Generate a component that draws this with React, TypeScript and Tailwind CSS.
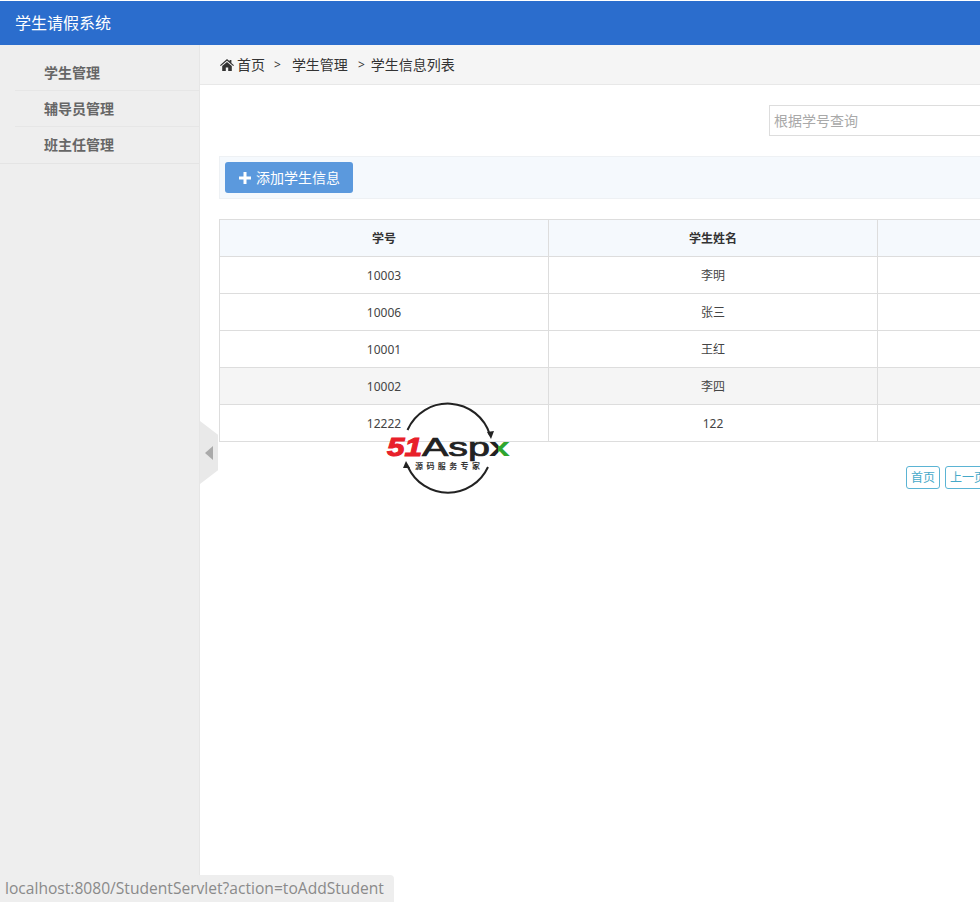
const menu = ['学生管理', '辅导员管理', '班主任管理']

const students = [
  { id: '10003', name: '李明' },
  { id: '10006', name: '张三' },
  { id: '10001', name: '王红' },
  { id: '10002', name: '李四', hover: true },
  { id: '12222', name: '122' },
]

function HomeIcon() {
  return (
    <svg viewBox="0 0 14 12" className="h-3 w-3.5 fill-[#333]">
      <path d="M7 0 L9.6 2.3 V1 H11.4 V3.9 L14 6.2 L13.2 7 L7 1.7 L0.8 7 L0 6.2 Z" />
      <path d="M2.2 7 L7 2.9 L11.8 7 V12 H8.2 V8.6 H5.8 V12 H2.2 Z" />
    </svg>
  )
}

function Logo() {
  return (
    <svg viewBox="0 0 126 92" className="h-[92px] w-[126px]">
      <defs>
        <linearGradient id="xfill" x1="0" x2="1" y1="0" y2="0">
          <stop offset="0.42" stopColor="#222" />
          <stop offset="0.42" stopColor="#2fa52f" />
        </linearGradient>
      </defs>
      <path d="M21.5 28 A44 44 0 0 1 104 33" fill="none" stroke="#222" strokeWidth="2" />
      <path d="M105 37 L101 30 L108 29 Z" fill="#222" />
      <path d="M102 65 A44 44 0 0 1 22 65" fill="none" stroke="#222" strokeWidth="2" />
      <path d="M20 59 L17 66 L24 66 Z" fill="#222" />
      <text x="1" y="54" fontFamily="Liberation Sans" fontSize="25" fontWeight="700" fontStyle="italic" fill="#e8202a" stroke="#e8202a" strokeWidth="1" textLength="35" lengthAdjust="spacingAndGlyphs">51</text>
      <text x="36" y="54" fontFamily="Liberation Sans" fontSize="25" fill="#222" stroke="#222" strokeWidth="0.7" textLength="68" lengthAdjust="spacingAndGlyphs">Asp</text>
      <text x="103" y="54" fontFamily="Liberation Sans" fontSize="25" fontWeight="700" fill="url(#xfill)" textLength="21" lengthAdjust="spacingAndGlyphs">x</text>
      <text x="29" y="67" fontFamily="Noto Sans CJK SC" fontSize="8" fontWeight="700" fill="#333" textLength="65">源码服务专家</text>
    </svg>
  )
}

export default function App() {
  return (
    <div className="relative h-[902px] w-[980px] overflow-hidden bg-white font-['Noto_Sans','Noto_Sans_CJK_SC',sans-serif] text-xs text-[#333]">
      <header className="mt-px flex h-11 items-center bg-[#2b6dcd] px-[15px] text-base text-white">
        学生请假系统
      </header>

      <div className="flex h-[857px]">
        <aside className="w-[200px] shrink-0 border-r border-[#e6e6e6] bg-[#eeeeee]">
          <ul className="border-b border-[#e4e4e4] pt-2.5">
            {menu.map((item, i) => (
              <li
                key={item}
                className={`ml-[15px] flex h-9 items-center pl-[29px] text-sm font-bold text-[#666] ${i < 2 ? 'border-b border-[#e6e6e6]' : ''}`}
              >
                {item}
              </li>
            ))}
          </ul>
        </aside>

        <main className="min-w-0 flex-1">
          <div className="flex h-10 items-center whitespace-pre border-b border-[#e8e8e8] bg-[#f5f5f5] pl-5 text-sm">
            <HomeIcon />
            <span className="ml-[3px]">首页</span>
            <span className="ml-[9px] text-xs">&gt;</span>
            <span className="ml-[11px]">学生管理</span>
            <span className="ml-[10px] text-xs">&gt;</span>
            <span className="ml-[6px]">学生信息列表</span>
          </div>

          <div className="w-[1200px] pl-[19px] pt-5">
            <div className="ml-[550px] flex h-[31px] w-[400px] items-center border border-[#dddddd] px-1 text-sm text-[#a9a9a9]">
              根据学号查询
            </div>

            <div className="mt-5 flex h-[43px] items-center border border-[#eef1f4] bg-[#f5f9fd] pl-[5px]">
              <button className="flex h-[31px] w-[128px] items-center rounded-[3px] bg-[#5b99dd] pl-3.5 text-sm text-white">
                <svg viewBox="0 0 12 12" className="mr-[5px] h-3 w-3 fill-white">
                  <path d="M4.5 0 H7.5 V4.5 H12 V7.5 H7.5 V12 H4.5 V7.5 H0 V4.5 H4.5 Z" />
                </svg>
                添加学生信息
              </button>
            </div>

            <table className="mt-5 w-[988px] table-fixed border-collapse border border-[#dddddd] text-center">
              <thead>
                <tr className="h-[37px] bg-[#f5f9fd] font-bold">
                  <th className="border border-[#dddddd] pt-0.5">学号</th>
                  <th className="border border-[#dddddd] pt-0.5">学生姓名</th>
                  <th className="border border-[#dddddd]"></th>
                </tr>
              </thead>
              <tbody>
                {students.map((s) => (
                  <tr key={s.id} className={`h-[37px] text-[#444] ${s.hover ? 'bg-[#f5f5f5]' : ''}`}>
                    <td className="border border-[#dddddd] pt-0.5">{s.id}</td>
                    <td className="border border-[#dddddd] pt-0.5">{s.name}</td>
                    <td className="border border-[#dddddd]"></td>
                  </tr>
                ))}
              </tbody>
            </table>

            <div className="ml-[687px] mt-[24px] flex gap-[5px] text-[#46a9c9]">
              <span className="flex h-[23px] w-[34px] items-center justify-center rounded-[3px] border border-[#5bb4d4]">首页</span>
              <span className="flex h-[23px] w-[46px] items-center justify-center rounded-[3px] border border-[#5bb4d4]">上一页</span>
            </div>
          </div>
        </main>
      </div>

      {/* collapse handle */}
      <div className="absolute left-[200px] top-[421px] flex h-[63px] w-[18px] items-center [clip-path:polygon(0_0,100%_22%,100%_78%,0_100%)] bg-[#e9e9e9] pl-[5px]">
        <div className="h-0 w-0 border-y-[7px] border-r-[8px] border-y-transparent border-r-[#aaaaaa]" />
      </div>

      {/* watermark */}
      <div className="absolute left-[386px] top-[402px]">
        <Logo />
      </div>

      {/* browser status bubble */}
      <div className="absolute bottom-0 left-0 flex h-[27px] w-[394px] items-center rounded-tr-[4px] bg-[#ededed]/95 pl-[5px] font-['Open_Sans',sans-serif] text-[15.6px] text-[#8a8a8a]">
        localhost:8080/StudentServlet?action=toAddStudent
      </div>
    </div>
  )
}
